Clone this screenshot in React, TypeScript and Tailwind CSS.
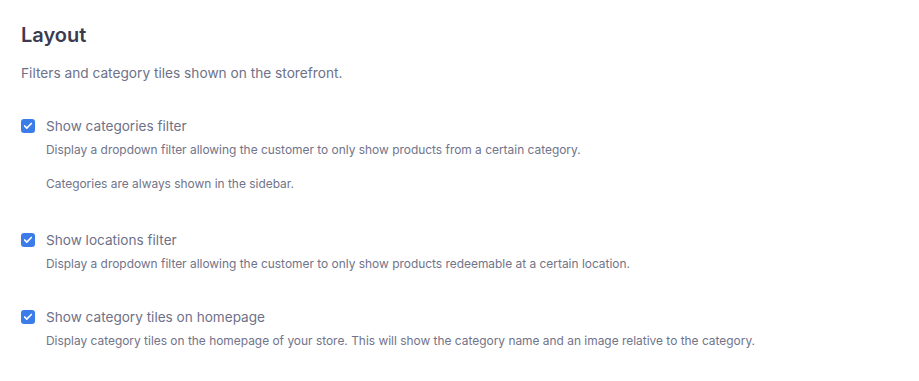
import { Check } from 'lucide-react';

interface OptionProps {
  label: string;
  className?: string;
  children: React.ReactNode;
}

function Option({ label, className, children }: OptionProps) {
  return (
    <div className={`flex gap-[11px] ${className ?? ''}`}>
      <div className="mt-[4px] flex h-[14px] w-[14px] shrink-0 items-center justify-center rounded-[3px] bg-[#3b7ce9]">
        <Check className="h-[10px] w-[10px] text-white" strokeWidth={4} />
      </div>
      <div>
        <p className="text-[13.6px] leading-[22px] text-[#6e7188]">{label}</p>
        <div className="mt-[5px] space-y-[18px] text-[11.93px] leading-[16px] text-[#71748a]">{children}</div>
      </div>
    </div>
  );
}

export default function App() {
  return (
    <div className="min-h-screen bg-white px-[21px] pt-[21px]" style={{ fontFamily: 'Inter, "Noto Sans", sans-serif' }}>
      <h1 className="text-[20px] font-semibold leading-[28px] text-[#3a3b50]">Layout</h1>
      <p className="mt-[14px] text-[13.7px] leading-[20px] text-[#6e7188]">Filters and category tiles shown on the storefront.</p>

      <div className="mt-[32px] flex flex-col">
        <Option label="Show categories filter">
          <p>Display a dropdown filter allowing the customer to only show products from a certain category.</p>
          <p>Categories are always shown in the sidebar.</p>
        </Option>
        <Option label="Show locations filter" className="mt-[37px]">
          <p>Display a dropdown filter allowing the customer to only show products redeemable at a certain location.</p>
        </Option>
        <Option label="Show category tiles on homepage" className="mt-[34px]">
          <p>Display category tiles on the homepage of your store. This will show the category name and an image relative to the category.</p>
        </Option>
      </div>
    </div>
  );
}
